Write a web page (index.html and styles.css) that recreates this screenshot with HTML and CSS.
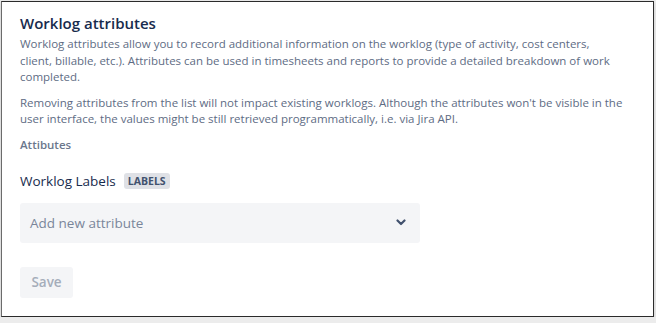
FILE: index.html
```html
<!DOCTYPE html>
<html lang="en">
<head>
  <meta charset="UTF-8">
  <title>Worklog attributes</title>
  <link rel="stylesheet" href="styles.css">
</head>
<body>

  <div class="ventana">
    <div class="atributos">
      <h2>Worklog attributes</h2>
      <p>Worklog attributes allow you to record additional information on the worklog (type of activity, cost centers,<br> client, billable, etc.). Attributes can be used in timesheets and reports to provide a detailed breakdown of work completed.</p>
      <p>Removing attributes from the list will not impact existing worklogs. Although the attributes won't be visible in the user interface, the values might be still retrieved programmatically, i.e. via Jira API.</p>

      <h4>Attibutes</h4>

      <div class="atributo">
        <span>Worklog Labels</span>
        <span class="etiqueta">LABELS</span>
      </div>

      <div class="selector">
        <span>Add new attribute</span>
        <svg width="10" height="7" viewBox="0 0 10 7">
          <path d="M1.5 1.5 L5 5 L8.5 1.5" fill="none" stroke="#42526e" stroke-width="2.2" stroke-linecap="round" stroke-linejoin="round"/>
        </svg>
      </div>

      <button type="button" disabled>Save</button>
    </div>
  </div>

</body>
</html>
```

FILE: styles.css
```css
body {
  margin: 0;
  background-color: #ececec;
  font-family: "Open Sans", "Noto Sans", sans-serif;
}
.ventana {
  margin: 1px 0 0 1px;
  width: 651px;
  height: 314px;
  background-color: #fff;
  border: 1px solid #2b2b2b;
  border-left-color: #6b6b6b;
  box-shadow: 0 2px 4px rgba(0,0,0,0.15);
}
.atributos {
  padding: 9px 12px 0 18px;
  color: #172b4d;
}
.atributos h2 {
  margin: 0;
  font-size: 15px;
  font-weight: 600;
  line-height: 24px;
}
.atributos p {
  max-width: 605px;
  margin: 1px 0 9px;
  font-size: 11.5px;
  line-height: 16.5px;
  color: #5e6c84;
}
.atributos h4 {
  margin: 1px 0 0;
  font-size: 11.5px;
  font-weight: 600;
  line-height: 16px;
  color: #6b778c;
}
.atributo {
  display: flex;
  align-items: center;
  gap: 8px;
  margin-top: 19px;
  font-size: 13.5px;
  line-height: 18px;
}
.etiqueta {
  background-color: #dfe1e6;
  color: #42526e;
  font-size: 10.5px;
  font-weight: 700;
  line-height: 16px;
  padding: 0 4px;
  border-radius: 3px;
}
.selector {
  box-sizing: border-box;
  display: flex;
  align-items: center;
  justify-content: space-between;
  width: 400px;
  height: 40px;
  margin-top: 13px;
  padding: 0 14px 0 10px;
  background-color: #f4f5f7;
  border-radius: 3px;
  font-size: 13.5px;
  color: #7a869a;
}
.atributos button {
  margin-top: 24px;
  width: 53px;
  height: 31px;
  border: none;
  border-radius: 3px;
  background-color: #f4f5f7;
  color: #a5adba;
  font-family: inherit;
  font-size: 13.5px;
  font-weight: 600;
}
```
